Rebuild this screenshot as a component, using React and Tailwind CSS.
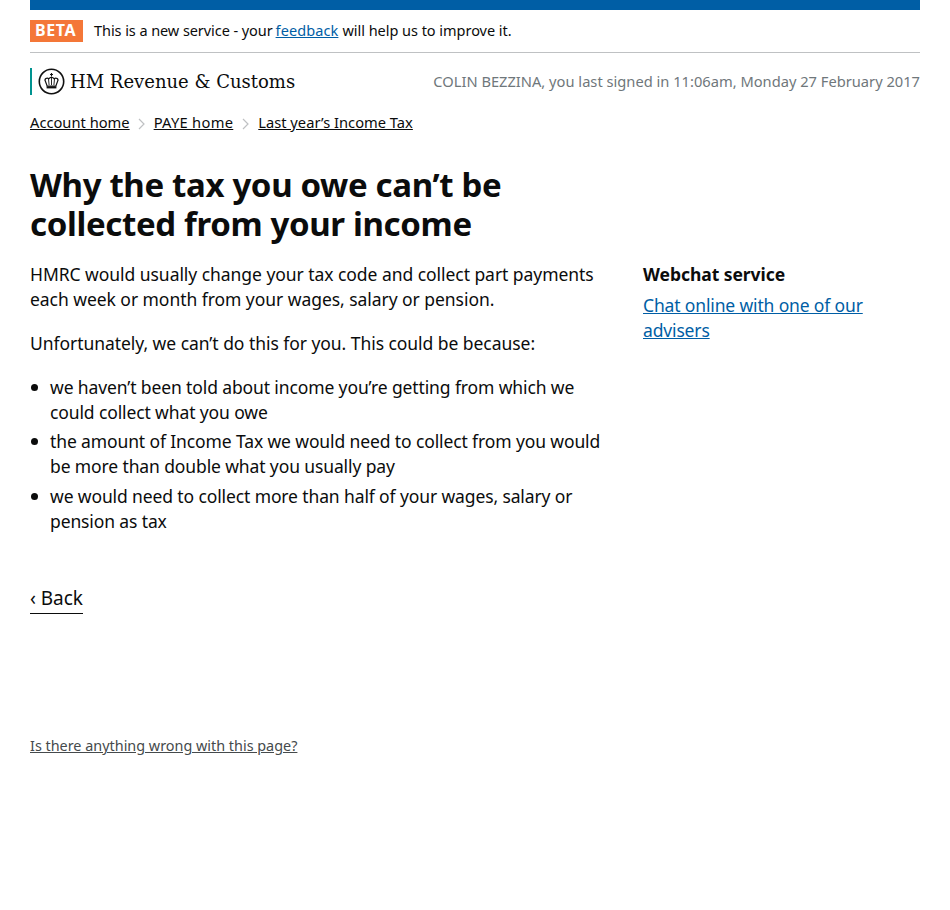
import React from 'react';

const font = "font-['Noto_Sans','Open_Sans',sans-serif]";

const Crest = () => (
  <svg width="27" height="27" viewBox="0 0 27 27" fill="none">
    <circle cx="13.5" cy="13.5" r="12.2" stroke="#111" strokeWidth="1.6" />
    {/* crown */}
    <path d="M7.5 13.5c-1.6-2.4 1.4-4.4 3.4-2.8.6-1 1.2-1.4 2.6-1.4s2 .4 2.6 1.4c2-1.6 5 .4 3.4 2.8l-1.6 4.5H9.1z" stroke="#111" strokeWidth="1.2" />
    <path d="M13.5 9.5V17M10.5 11l.6 6M16.5 11l-.6 6" stroke="#111" strokeWidth="0.9" />
    <rect x="8.6" y="18.2" width="9.8" height="2.2" fill="#111" />
    <path d="M13.5 5v3.4M12 6.5h3" stroke="#111" strokeWidth="1.1" />
  </svg>
);

const Chevron = ({ className }) => (
  <svg width="8" height="12" viewBox="0 0 8 12" fill="none" className={`mt-[3px] ${className}`}>
    <path d="M1 1l5 5-5 5" stroke="#bfc1c3" strokeWidth="1.2" />
  </svg>
);

const Item = ({ className, children }) => (
  <li className={`flex ${className || ''}`}>
    <span className="ml-px mt-[9px] h-[7px] w-[7px] shrink-0 rounded-full bg-[#0b0c0c]" />
    <span className="ml-[12px]">{children}</span>
  </li>
);

export default function App() {
  return (
    <div className={`${font} min-h-[910px] bg-white px-[30px] text-[#0b0c0c]`}>
      <div className="h-[10px] bg-[#005ea5]" />
      <div className="flex h-[43px] items-center border-b border-[#bfc1c3] text-[14.5px]">
        <span className="mr-[11px] h-[22px] w-[53px] bg-[#f47738] pl-[5px] text-[16px] font-bold leading-[21px] tracking-[0.6px] text-white">BETA</span>
        <span className="tracking-[-0.07px]">This is a new service - your </span>
        <a className="ml-[3px] tracking-[0.1px] text-[#005ea5] underline">feedback</a>
        <span className="ml-[4px] tracking-[-0.03px]">will help us to improve it.</span>
      </div>
      <div className="mt-[15px] flex h-[27px] items-center justify-between">
        <div className="flex h-[27px] items-center border-l-2 border-[#009390] pl-[6px]">
          <Crest />
          <span className="ml-[5px] font-['DejaVu_Serif',serif] text-[18px]">HM Revenue &amp; Customs</span>
        </div>
        <span className="text-[14.68px] text-[#6f777b]">COLIN BEZZINA, you last signed in 11:06am, Monday 27 February 2017</span>
      </div>
      <div className="mt-[17px] flex items-center text-[14.7px] leading-[20px]">
        <a className="underline">Account home</a>
        <Chevron className="mx-[8px]" />
        <a className="tracking-[0.3px] underline">PAYE home</a>
        <Chevron className="ml-[9px] mr-[8px]" />
        <a className="underline">Last year’s Income Tax</a>
      </div>
      <h1 className="mt-[33px] w-[560px] text-[33px] font-bold leading-[39px] tracking-[-0.35px]">Why the tax you owe can’t be collected from your income</h1>
      <div className="mt-[19px] flex text-[17.5px] leading-[25px] tracking-[-0.05px]">
        <div className="mr-[37px] w-[576px]">
          <p>HMRC would usually change your tax code and collect part payments each week or month from your wages, salary or pension.</p>
          <p className="mt-[19px]">Unfortunately, we can’t do this for you. This could be because:</p>
          <ul className="mt-[19px] tracking-[-0.12px]">
            <Item>we haven’t been told about income you’re getting from which we could collect what you owe</Item>
            <Item className="mt-[4px]">the amount of Income Tax we would need to collect from you would be more than double what you usually pay</Item>
            <Item className="mt-[5px]">we would need to collect more than half of your wages, salary or pension as tax</Item>
          </ul>
          <a className="mt-[52px] inline-block border-b border-[#0b0c0c] pb-[2px] text-[19px]">‹ Back</a>
        </div>
        <div className="flex-1">
          <h2 className="font-bold">Webchat service</h2>
          <a className="mt-[6px] block tracking-[-0.15px] text-[#005ea5] underline">Chat online with one of our advisers</a>
        </div>
      </div>
      <a className="mt-[122px] block text-[14.4px] leading-[20px] text-[#454a4c] underline">Is there anything wrong with this page?</a>
    </div>
  );
}
